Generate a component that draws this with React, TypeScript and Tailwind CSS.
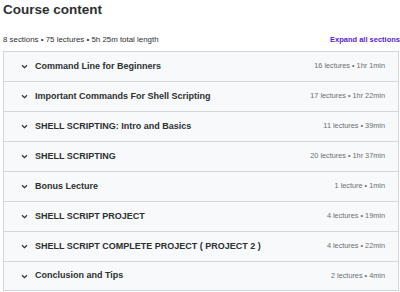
const sections = [
  { title: "Command Line for Beginners", meta: "16 lectures • 1hr 1min" },
  { title: "Important Commands For Shell Scripting", meta: "17 lectures • 1hr 22min" },
  { title: "SHELL SCRIPTING: Intro and Basics", meta: "11 lectures • 39min" },
  { title: "SHELL SCRIPTING", meta: "20 lectures • 1hr 37min" },
  { title: "Bonus Lecture", meta: "1 lecture • 1min" },
  { title: "SHELL SCRIPT PROJECT", meta: "4 lectures • 19min" },
  { title: "SHELL SCRIPT COMPLETE PROJECT ( PROJECT 2 )", meta: "4 lectures • 22min" },
  { title: "Conclusion and Tips", meta: "2 lectures • 4min" },
];

function Chevron() {
  return (
    <svg width="7" height="5" viewBox="0 0 7 5" className="shrink-0">
      <path d="M1 1.2 L3.5 3.6 L6 1.2" fill="none" stroke="#2d2f31" strokeWidth="1.2" />
    </svg>
  );
}

export default function App() {
  return (
    <div
      className="w-[400px] h-[292px] overflow-hidden bg-white pl-[3px] text-[#2d2f31]"
      style={{ fontFamily: '"Liberation Sans", Arial, sans-serif' }}
    >
      <h2 className="h-[20px] leading-[20px] text-[13.5px] font-bold">Course content</h2>
      <div className="mt-[14px] flex h-[12px] items-center justify-between">
        <span className="text-[7.9px] text-[#2d2f31]">8 sections • 75 lectures • 5h 25m total length</span>
        <button className="text-[7.5px] font-bold text-[#5624d0] whitespace-nowrap">Expand all sections</button>
      </div>
      <div className="mt-[5px] w-[396px] border border-[#d1d7dc]">
        {sections.map((s, i) => {
          const last = i === sections.length - 1;
          return (
            <div
              key={s.title}
              className={`flex items-center bg-[#f7f9fa] pl-[17px] pr-[13px] ${
                last ? "h-[28px]" : "h-[30px] border-b border-[#d1d7dc]"
              }`}
            >
              <Chevron />
              <span className="ml-[7px] text-[9px] font-bold">{s.title}</span>
              <span className="ml-auto text-[7.3px] text-[#6a6f73]">{s.meta}</span>
            </div>
          );
        })}
      </div>
    </div>
  );
}
